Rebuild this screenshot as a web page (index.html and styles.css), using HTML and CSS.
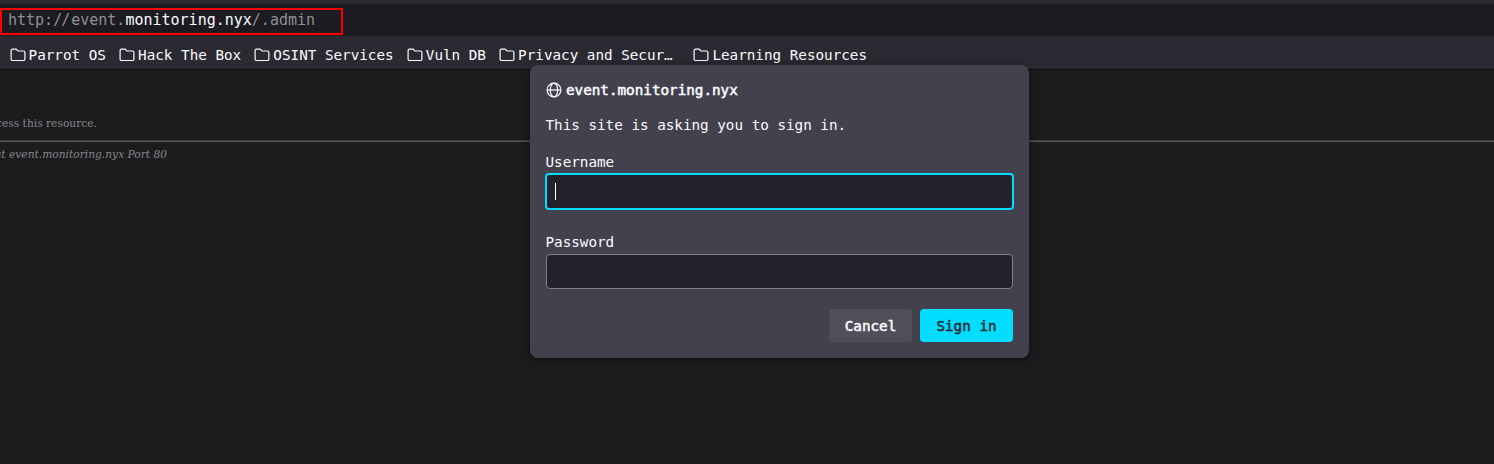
FILE: index.html
```
<!DOCTYPE html>
<html lang="en">
<head>
<meta charset="utf-8">
<title>event.monitoring.nyx</title>
<link rel="stylesheet" href="styles.css">
</head>
<body>
<svg class="defs" width="0" height="0">
  <symbol id="folder" viewBox="0 0 16 14"><path d="M2.600 1.100h3.500l1.900 1.900h5.400a1.500 1.500 0 0 1 1.500 1.500v6.500a1.500 1.500 0 0 1-1.500 1.500H2.600a1.500 1.500 0 0 1-1.500-1.500V2.600a1.500 1.500 0 0 1 1.500-1.500z" fill="none" stroke="currentColor" stroke-width="1.200"/></symbol>
</svg>
<header class="toolbar">
  <div class="url"><span class="dim">http:<span class="slashes">//</span>event.</span><span>monitoring.nyx</span><span class="dim">/.admin</span></div>
</header>
<nav class="bookmarks">
  <a class="bookmark"><svg class="folder"><use href="#folder"/></svg><span>Parrot OS</span></a>
  <a class="bookmark"><svg class="folder"><use href="#folder"/></svg><span>Hack The Box</span></a>
  <a class="bookmark"><svg class="folder"><use href="#folder"/></svg><span>OSINT Services</span></a>
  <a class="bookmark"><svg class="folder"><use href="#folder"/></svg><span>Vuln DB</span></a>
  <a class="bookmark clipped"><svg class="folder"><use href="#folder"/></svg><span>Privacy and Secur…</span></a>
  <a class="bookmark"><svg class="folder"><use href="#folder"/></svg><span>Learning Resources</span></a>
</nav>
<main class="page">
  <p class="message">cess this resource.</p>
  <hr class="rule">
  <address class="server">at event.monitoring.nyx Port 80</address>
</main>
<form class="dialog">
  <div class="origin">
    <svg class="globe" viewBox="0 0 16 16" fill="none" stroke="currentColor" stroke-width="1.200"><circle cx="8" cy="8" r="6.900"/><ellipse cx="8" cy="8" rx="3.700" ry="6.900"/><path d="M1 8h14"/></svg>
    <span>event.monitoring.nyx</span>
  </div>
  <p class="prompt">This site is asking you to sign in.</p>
  <label class="label">Username</label>
  <div class="field focused"><span class="caret"></span></div>
  <label class="label">Password</label>
  <div class="field"></div>
  <div class="actions">
    <button type="button" class="button">Cancel</button>
    <button type="button" class="button primary">Sign in</button>
  </div>
</form>
</body>
</html>
```
FILE: styles.css
```
* { box-sizing: border-box; }
body {
  margin: 0;
  width: 1494px;
  height: 464px;
  overflow: hidden;
  position: relative;
  background: #1c1b1e;
  color: #fbfbfe;
  font: 14.28px/20px "DejaVu Sans Mono", "Liberation Mono", monospace;
}
p { margin: 0; }
.defs { position: absolute; }
.toolbar {
  height: 36px;
  border-top: 4px solid #2b2a33;
  background: #1c1b22;
  padding-top: 4px;
}
.url {
  width: 343px;
  height: 27px;
  border: 2px solid #f00;
  padding-left: 6px;
  font-size: 15px;
  line-height: 20px;
  white-space: pre;
}
.dim { color: #8f8f94; }
.slashes { letter-spacing: -1px; margin-right: 2px; }
.bookmarks {
  height: 34px;
  background: #2b2a33;
  border-bottom: 1px solid #0c0c0d;
  display: flex;
  align-items: center;
  gap: 13.2px;
  padding: 4px 0 0 9.6px;
}
.bookmark {
  display: flex;
  align-items: center;
  gap: 3px;
  white-space: nowrap;
}
.clipped { margin-right: 7.5px; }
.folder { width: 16px; height: 14px; flex: none; }
.page {
  padding-top: 46px;
  color: #87868a;
  font: 10.67px/16px "DejaVu Serif", serif;
}
.message { margin-left: -4px; }
.rule {
  height: 2px;
  margin: 8px 0 5px;
  border: 0;
  border-top: 1px solid #3c3c3f;
  background: #57575a;
}
.server { margin-left: -5px; font-style: italic; }
.dialog {
  position: absolute;
  left: 530px;
  top: 65px;
  width: 499px;
  height: 293px;
  padding: 15px 16px 0;
  border-radius: 8px;
  background: #42414d;
  box-shadow: 0 2px 10px rgba(0, 0, 0, .45);
}
.origin {
  display: flex;
  align-items: center;
  gap: 4px;
  height: 20px;
}
.origin span { -webkit-text-stroke: .5px currentColor; }
.globe { width: 16px; height: 16px; }
.prompt { margin: 15px 0 16px; }
.label, .prompt { text-indent: -.5px; }
.label { display: block; height: 23px; padding-top: 1px; }
.field {
  height: 35px;
  border: 1px solid #80808a;
  border-radius: 4px;
  background: #23222b;
}
.focused {
  height: 37px;
  margin: -1px -1px 21px;
  border: 2px solid #00ddff;
  padding: 8px;
}
.caret { display: block; width: 1px; height: 17px; background: #fff; }
.actions { display: flex; justify-content: flex-end; gap: 8px; margin-top: 20px; }
.button {
  width: 83px;
  height: 33px;
  padding: 0;
  border: 0;
  border-radius: 4px;
  background: #504f59;
  color: #fbfbfe;
  font: 14.28px/20px "DejaVu Sans Mono", monospace;
  -webkit-text-stroke: .5px currentColor;
}
.primary { width: 93px; background: #00ddff; color: #2b2a33; }
```
